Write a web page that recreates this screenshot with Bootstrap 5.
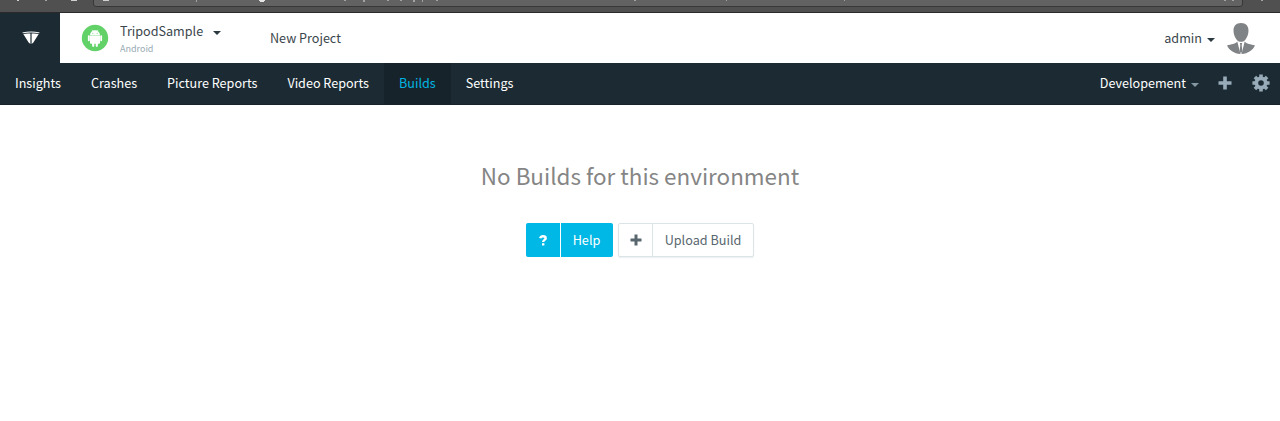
<!DOCTYPE html>
<html lang="en">
<head>
<meta charset="utf-8">
<meta name="viewport" content="width=device-width, initial-scale=1">
<title>Builds</title>
<link href="https://cdn.jsdelivr.net/npm/bootstrap@5.3.0/dist/css/bootstrap.min.css" rel="stylesheet">
<style>
body{font-family:"Noto Sans CJK SC",sans-serif;font-size:12.6px;line-height:20px;color:#3a464c;background:#fff;height:421px;overflow:hidden}
svg{display:block;flex:none}
.chrome{height:13px;background:#505050;border-bottom:1px solid #292929}
.topbar{height:50px}
.brand{width:60px;height:50px;background:#1c2b33}
.app-icon{margin-left:21px}
.app-name{width:97px;margin-left:11px}
.app-name span{line-height:20px}
.app-name small{font-size:9px;line-height:15px;color:#98abb3}
.arrow{width:0;height:0;border:4px solid transparent;border-top-color:#2b3940;border-bottom:0}
.newproj{margin-left:49px}
.mainnav{height:42px;background:#1c2b33;border-bottom:1px solid #17232a}
.mainnav .nav-link{padding:0 15px;height:41px;line-height:40px;color:#fff}
.mainnav .nav-link.active{background:#17232b;color:#00b5e2}
.headline{font-size:22.45px;line-height:34px;color:#858585;margin:53px 0 31px}
.actions{gap:5px}
.act{height:34px;padding:0;border-radius:2px;font-size:12.65px;line-height:32px;display:flex;align-items:center}
.act .ico{width:34px;height:100%;display:flex;align-items:center;justify-content:center}
.act .lbl{flex:1;height:100%;border-left:1px solid;text-align:center;line-height:34px}
.act-help{width:87px;background:#00b8e5;color:#fff;border:0}
.act-help .lbl{border-color:#fff;padding-right:1px}
.act-up{width:136px;background:#fff;color:#58666e;border:1px solid #dbe4e6;box-shadow:0 1px 1px rgba(90,120,120,.12)}
.act-up .ico{width:33px}
.act-up .lbl{border-color:#dbe4e6;line-height:32px}
</style>
</head>
<body>
<div class="chrome overflow-hidden">
<svg width="1280" height="12" viewBox="0 0 1280 12">
<path d="M93.500-1V4Q93.500 6.500 96 6.500H1240Q1242.500 6.500 1242.500 4V-1" fill="#626262" stroke="#373737"/>
<path d="M17 0h2v1h-2zM71 0h6v1h-6zM103 0h6v1h-6z" fill="#d0d0d0"/>
<path d="M45 0h2v1h-2zM344 0h2v1h-2zM363 0h2v2h-2zM387 0h2v1h-2zM400 0h2v1h-2zM413 0h2v2h-2zM422 0h1v2h-1zM436 0h2v1h-2zM634 0h2v1h-2zM726 0h1v1h-1zM844 0h1v1h-1zM1224 0h2v1h-2zM1232 0h2v1h-2zM1261 0h2v1h-2zM196 0h1v2h-1z" fill="#a3a3a3"/>
<path d="M259 0h6v1h-1v1h-4v-1h-1z" fill="#e5e5e5"/>
</svg>
</div>
<header class="topbar d-flex align-items-center">
<div class="brand d-flex align-items-center justify-content-center">
<svg width="18" height="14" viewBox="0 0 18 14" style="margin-left:2px"><path fill="#fff" d="M.300 1.400Q9-.600 17.700 1.400L17.100 2.300Q9 .900 .900 2.300ZM1.300 3Q4.500 2.200 8.400 2.600V13L6.600 11.600ZM16.700 3Q13.500 2.200 9.600 2.600V13L11.400 11.600Z"/></svg>
</div>
<svg class="app-icon" width="28" height="28" viewBox="0 0 28 28"><circle cx="14" cy="14" r="13.200" fill="#62d168"/><g fill="#fff"><path d="M9 11.200a5 5 0 0 1 10 0z"/><path d="M9 11.500h10v7.300a1 1 0 0 1-1 1h-1.100v2a1.100 1.100 0 0 1-2.200 0v-2h-1.400v2a1.100 1.100 0 0 1-2.200 0v-2H10a1 1 0 0 1-1-1z"/><rect x="6.900" y="11.200" width="1.900" height="6" rx=".9"/><rect x="19.200" y="11.200" width="1.900" height="6" rx=".9"/></g><path d="m11 5.800 1 1.500m5-1.500-1 1.500" stroke="#fff" stroke-width=".6"/><circle cx="11.800" cy="9.200" r=".5" fill="#62d168"/><circle cx="16.200" cy="9.200" r=".5" fill="#62d168"/></svg>
<div class="app-name d-flex flex-column"><span>TripodSample</span><small>Android</small></div>
<i class="arrow" style="margin-left:-4px;margin-top:-10px"></i>
<span class="newproj">New Project</span>
<span class="ms-auto">admin</span>
<i class="arrow mt-1" style="margin-left:5px"></i>
<svg width="34" height="34" viewBox="0 0 34 34" style="margin-left:9px;margin-right:22px"><g fill="#808385"><path d="M17 2c5 0 7.500 3 7.500 7.500 0 4-1.500 7-3 9-1 1.500-2.500 2.300-4.500 2.300s-3.500-.8-4.500-2.300c-1.500-2-3-5-3-9C9.500 5 12 2 17 2Z"/><path d="M13.300 20.500 16.500 32.900C10 32.800 5 28.900 3 24.500c4-1.200 8.800-1.700 10.300-4ZM20.700 20.500 17.500 32.900c6.500-.1 11.500-4 13.500-8.400-4-1.200-8.800-1.700-10.300-4Z"/><path d="M15.800 22h2.400l-.5 2 .6 6-1.300 2.700-1.300-2.700.6-6z"/></g></svg>
</header>
<nav class="mainnav d-flex">
<div class="nav flex-nowrap">
<a class="nav-link" href="#">Insights</a><a class="nav-link" href="#">Crashes</a><a class="nav-link" href="#">Picture Reports</a><a class="nav-link" href="#">Video Reports</a><a class="nav-link active" href="#">Builds</a><a class="nav-link" href="#">Settings</a>
</div>
<div class="ms-auto d-flex align-items-center text-white" style="height:40px">
<span>Developement</span><i class="arrow" style="margin-left:5px;margin-top:4px;border-top-color:#8497a3"></i>
<svg width="14" height="14" viewBox="0 0 14 14" style="margin-left:19px"><path d="M7 .5v13M.5 7h13" stroke="#98abb8" stroke-width="3.600"/></svg>
<svg width="18" height="18" viewBox="0 0 18 18" style="margin-left:20px;margin-right:10px"><g stroke="#98abb8" stroke-width="3.600"><path d="M9 .4v17.200M.4 9h17.200M2.900 2.900l12.200 12.200M15.100 2.900 2.900 15.100"/></g><circle cx="9" cy="9" r="6.500" fill="#98abb8"/><circle cx="9" cy="9" r="2.800" fill="#1c2b33"/></svg>
</div>
</nav>
<main class="text-center">
<h1 class="headline fw-normal">No Builds for this environment</h1>
<div class="actions d-flex justify-content-center">
<button class="btn act act-help"><span class="ico"><svg width="8" height="11" viewBox="0 0 8 11"><path d="M1.200 3.200C1.600 1.700 2.700 1.200 4 1.200c1.600 0 2.700.8 2.700 2C6.700 5 4.200 4.800 4.200 7" fill="none" stroke="#fff" stroke-width="2.400"/><path d="M3 8.200h2.400v2.300H3z" fill="#fff"/></svg></span><span class="lbl">Help</span></button>
<button class="btn act act-up"><span class="ico"><svg width="12" height="12" viewBox="0 0 12 12"><path d="M6 .5v11M.5 6h11" stroke="#58666e" stroke-width="3"/></svg></span><span class="lbl">Upload Build</span></button>
</div>
</main>
<script src="https://cdn.jsdelivr.net/npm/bootstrap@5.3.0/dist/js/bootstrap.bundle.min.js"></script>
</body>
</html>
